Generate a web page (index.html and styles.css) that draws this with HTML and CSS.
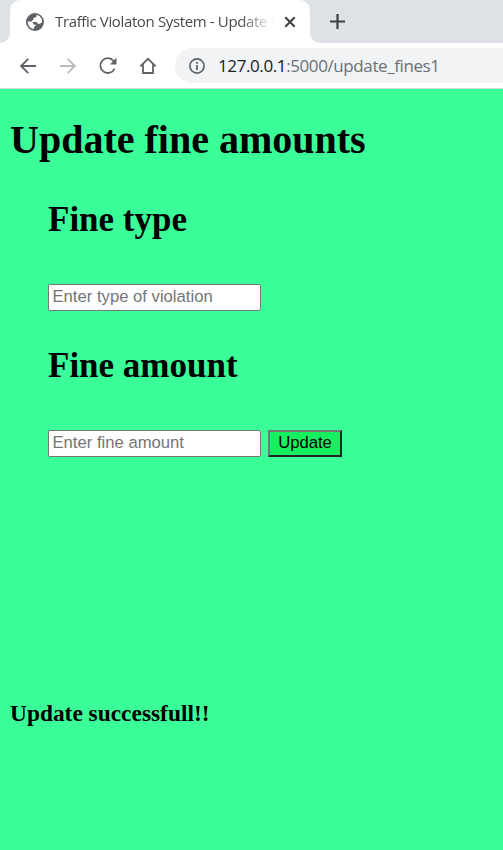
FILE: index.html
```html
<!DOCTYPE html>
<html lang="en">
<head>
<meta charset="utf-8">
<title>Traffic Violaton System - Update fines</title>
<link rel="stylesheet" href="styles.css">
</head>
<body>
<header class="browser">
  <div class="tabs">
    <div class="edge"></div>
    <div class="tab">
      <svg class="globe" width="18" height="18" viewBox="0 0 18 18"><circle cx="9" cy="9" r="9" fill="#5f6368"/><path d="M10.5 1.8C11.4 3.4 10 4.8 7.6 4.9C7.8 6.6 7.1 7.2 5.8 7.5V8.9H9.8C11.4 8.9 11.8 9.8 11.4 10.8H13.3C14.4 10.8 14.6 9.5 16.2 9.4C16.5 5.6 14 2.6 10.5 1.8ZM1.8 8.4H4.6C6.6 8.6 7.5 10 7.4 11.4H9.4V13.3C8 13.5 7.7 14.7 7.8 16.1C4.3 15.5 1.7 12.4 1.8 8.4Z" fill="#fff"/></svg>
      <span class="tab-title">Traffic Violaton System - Update f</span>
      <svg class="close" width="12" height="12" viewBox="0 0 12 12"><path d="M1.3 1.3L10.7 10.7M10.7 1.3L1.3 10.7" stroke="#3c4043" stroke-width="2"/></svg>
    </div>
    <div class="rest">
      <svg width="15" height="15" viewBox="0 0 15 15"><path d="M7.5 0V15M0 7.5H15" stroke="#3c4043" stroke-width="2.2"/></svg>
    </div>
  </div>
  <div class="toolbar">
    <svg width="16" height="16" viewBox="0 0 16 16"><path d="M16 8H1.5M8.3 .8L1.1 8L8.3 15.2" fill="none" stroke="#5f6368" stroke-width="1.8"/></svg>
    <svg width="16" height="16" viewBox="0 0 16 16"><path d="M0 8H14.5M7.7 .8L14.9 8L7.7 15.2" fill="none" stroke="#babcbe" stroke-width="1.8"/></svg>
    <svg width="18" height="18" viewBox="0 0 18 18"><path d="M14.6 4A7.4 7.4 0 1 0 15.6 11.5" fill="none" stroke="#5f6368" stroke-width="1.8"/><path d="M17.5 .8V7.5H10.8Z" fill="#5f6368"/></svg>
    <svg width="18" height="18" viewBox="0 0 18 18"><path d="M1.3 9.3L9 1.8L16.7 9.3M4 7.2V16H14V7.2" fill="none" stroke="#5f6368" stroke-width="1.8"/></svg>
    <div class="address">
      <svg width="16" height="16" viewBox="0 0 16 16"><circle cx="8" cy="8" r="7.1" fill="none" stroke="#5f6368" stroke-width="1.7"/><path d="M8 7V12M8 4V5.8" stroke="#5f6368" stroke-width="1.8"/></svg>
      <span class="url"><span class="host">127.0.0.1</span>:5000/update_fines1</span>
    </div>
  </div>
</header>
<main>
  <h1>Update fine amounts</h1>
  <form>
    <h2>Fine type</h2>
    <div class="row"><input type="text" placeholder="Enter type of violation"></div>
    <h2>Fine amount</h2>
    <div class="row"><input type="text" placeholder="Enter fine amount"><button type="button">Update</button></div>
  </form>
  <h3>Update successfull!!</h3>
</main>
</body>
</html>
```
FILE: styles.css
```css
* { box-sizing: border-box; }
body { margin: 0; height: 850px; overflow: hidden; background: #3aff99; color: #000; font-family: "Liberation Serif", serif; }
svg { display: block; flex: none; }
.browser { height: 89px; background: #fff; border-bottom: 1px solid #d5d8dc; font-family: "Open Sans", sans-serif; }
.tabs { display: flex; height: 43px; background: linear-gradient(#dee1e6, #dee1e6) 0 0 / 100% 20px no-repeat #fff; }
.edge { width: 10px; background: #dee1e6; border-bottom-right-radius: 10px; }
.tab { width: 300px; display: flex; align-items: center; padding-left: 16px; background: #fff; border-radius: 10px 10px 0 0; }
.tab-title { width: 218px; height: 24px; margin: -2px 0 0 11px; white-space: nowrap; font-size: 15px; line-height: 24px; letter-spacing: -.36px; color: #45494d; -webkit-mask-image: linear-gradient(90deg, #000 185px, transparent 219px); mask-image: linear-gradient(90deg, #000 185px, transparent 219px); }
.close { margin-left: 11px; }
.rest { flex: 1; display: flex; align-items: center; padding-left: 20px; background: #dee1e6; border-bottom-left-radius: 10px; }
.toolbar { display: flex; align-items: center; height: 45px; padding-left: 20px; }
.toolbar > svg + svg { margin-left: 24px; }
.toolbar > svg:nth-child(3) { margin-left: 23px; }
.toolbar > svg:nth-child(4) { margin-left: 22px; }
.address { display: flex; align-items: center; flex: 1; height: 35px; margin-left: 18px; padding-left: 14px; border-radius: 18px 0 0 18px; background: #f1f3f4; }
.url { margin-left: 13px; white-space: nowrap; font-size: 17px; line-height: 24px; letter-spacing: -.4px; color: #6c7074; }
.host { color: #202124; }
main { padding: 0 10px; }
h1, h2, h3 { margin: 0; font-weight: 700; white-space: nowrap; }
h1 { padding-top: 28px; font-size: 40px; line-height: 46px; }
form { padding-left: 38px; }
h2 { padding-top: 37px; font-size: 35px; line-height: 40px; }
.row { display: flex; gap: 7px; margin-top: 44px; }
.row + h2 { padding-top: 35px; }
input { width: 213px; height: 27px; padding: 0 4px 2px 3.5px; border: 1px solid #767676; border-radius: 2px; background: #fff; font: 16.67px "Liberation Sans", sans-serif; }
input::placeholder { color: #757575; }
button { width: 74px; height: 27px; padding: 0 0 2px; border: 2px solid; border-color: #767676 #222 #222 #767676; background: #16f060; color: #000; font: 16.67px "Liberation Sans", sans-serif; }
h3 { margin-top: 243px; font-size: 23.4px; line-height: 27px; }
```
